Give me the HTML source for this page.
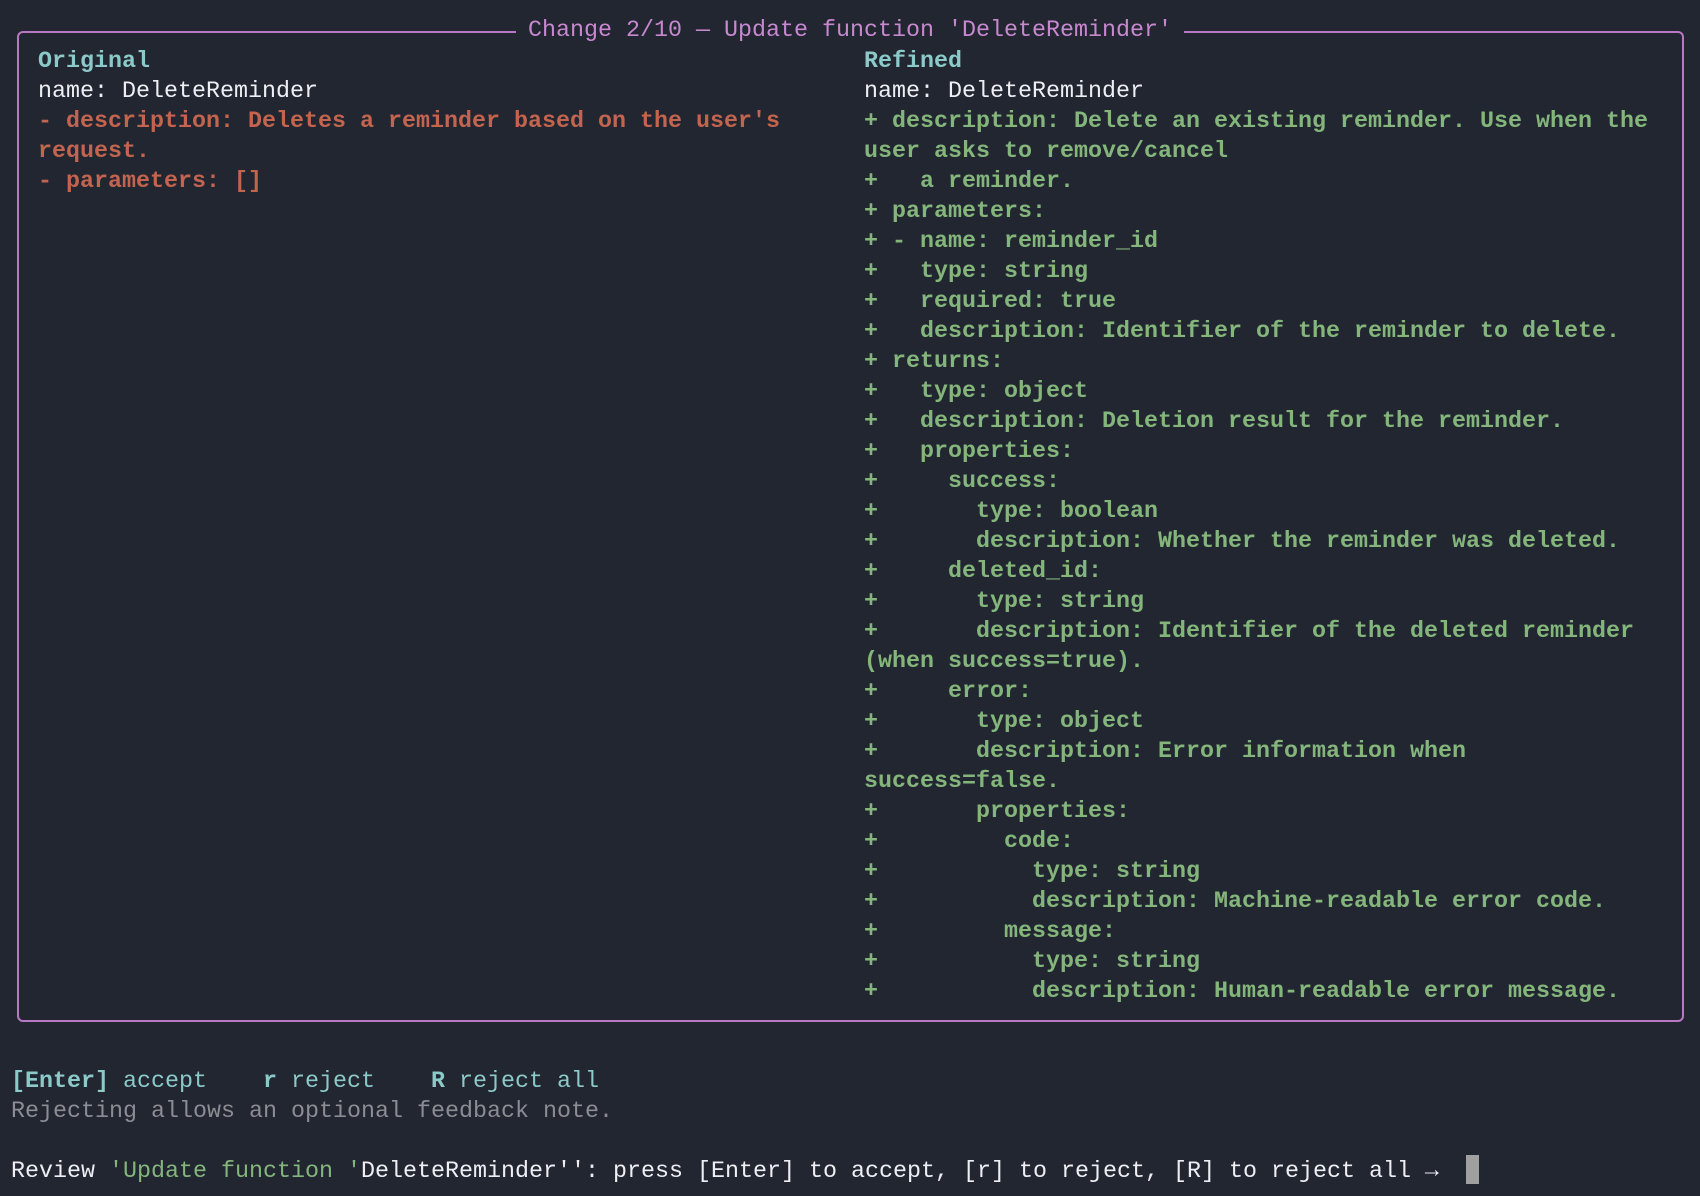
<!DOCTYPE html>
<html><head><meta charset="utf-8"><style>
html,body{margin:0;padding:0;background:#222631;width:1700px;height:1196px;overflow:hidden}
body{position:relative;font-family:"Liberation Mono",monospace;font-size:23.33px}
.box{position:absolute;left:17px;top:31px;width:1667px;height:991px;border:2px solid #b978c4;border-radius:6px;box-sizing:border-box}
.title{position:absolute;top:16px;left:516px;padding:0 12px;background:#222631;color:#c888d0;line-height:30px;white-space:pre}
pre{margin:0;position:absolute;font:inherit;line-height:30px;white-space:pre}
.w{color:#eceff3}.t{color:#8ccaca;font-weight:bold}.r{color:#c3644f;font-weight:bold}.g{color:#84b67c;font-weight:bold}
.tn{color:#8ccaca}.gray{color:#8a8d93}.gn{color:#84b67c}
</style></head><body>
<div class="box"></div>
<div class="title">Change 2/10 — Update function 'DeleteReminder'</div>
<pre style="left:38px;top:47px"><span class="t">Original</span>
<span class="w">name: DeleteReminder</span>
<span class="r">- description: Deletes a reminder based on the user's
request.
- parameters: []</span></pre>
<pre style="left:864px;top:47px"><span class="t">Refined</span>
<span class="w">name: DeleteReminder</span>
<span class="g">+ description: Delete an existing reminder. Use when the
user asks to remove/cancel
+   a reminder.
+ parameters:
+ - name: reminder_id
+   type: string
+   required: true
+   description: Identifier of the reminder to delete.
+ returns:
+   type: object
+   description: Deletion result for the reminder.
+   properties:
+     success:
+       type: boolean
+       description: Whether the reminder was deleted.
+     deleted_id:
+       type: string
+       description: Identifier of the deleted reminder
(when success=true).
+     error:
+       type: object
+       description: Error information when
success=false.
+       properties:
+         code:
+           type: string
+           description: Machine-readable error code.
+         message:
+           type: string
+           description: Human-readable error message.</span></pre>
<pre style="left:11px;top:1067px"><span class="t">[Enter]</span><span class="tn"> accept    </span><span class="t">r</span><span class="tn"> reject    </span><span class="t">R</span><span class="tn"> reject all</span>
<span class="gray">Rejecting allows an optional feedback note.</span></pre>
<pre style="left:11px;top:1157px"><span class="w">Review </span><span class="gn">'Update function '</span><span class="w">DeleteReminder'': press [Enter] to accept, [r] to reject, [R] to reject all →</span></pre>
<div style="position:absolute;left:1466px;top:1155px;width:13px;height:29px;background:#a0a0a0"></div>
</body></html>
